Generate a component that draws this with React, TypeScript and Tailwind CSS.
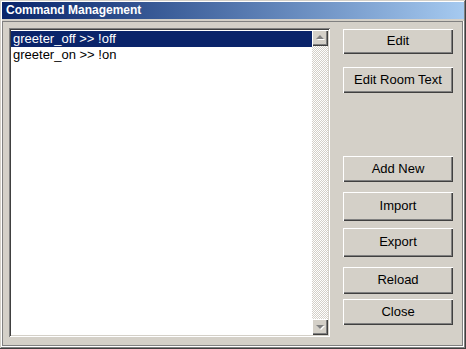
const raised =
  "shadow-[inset_1px_1px_#ffffff,inset_-1px_-1px_#404040,inset_-2px_-2px_#808080]";

const buttons = [
  { label: "Edit", cls: "mt-[1px] h-[25px]" },
  { label: "Edit Room Text", cls: "mt-[13px] h-[26px]" },
  { label: "Add New", cls: "mt-[63px] h-[26px]" },
  { label: "Import", cls: "mt-[10px] h-[29px]" },
  { label: "Export", cls: "mt-[7px] h-[29px]" },
  { label: "Reload", cls: "mt-[10px] h-[27px]" },
  { label: "Close", cls: "mt-[5px] h-[26px]" },
];

const items = ["greeter_off >> !off", "greeter_on >> !on"];

function Arrow({ up }: { up: boolean }) {
  const pts = up ? "4,9 8,5 12,9" : "4,6 8,10 12,6";
  const shadow = up ? "5,10 9,6 13,10" : "5,7 9,11 13,7";
  return (
    <div className={`w-[16px] h-[16px] bg-[#d4d0c8] ${raised}`}>
      <svg width="16" height="16" viewBox="0 0 16 16">
        <polygon points={shadow} fill="#ffffff" />
        <polygon points={pts} fill="#808080" />
      </svg>
    </div>
  );
}

export default function App() {
  const [selected, setSelected] = React.useState(0);

  return (
    <div
      className="w-[466px] h-[349px] bg-[#d4d0c8] p-[2px] flex flex-col shadow-[inset_-1px_-1px_#404040,inset_1px_1px_#d4d0c8,inset_-2px_-2px_#808080,inset_2px_2px_#ffffff]"
      style={{ fontFamily: '"Liberation Sans", Arial, sans-serif' }}
    >
      <div className="h-[17px] bg-gradient-to-r from-[#0a246a] to-[#a6caf0] text-white font-bold text-[12px] leading-[17px] pl-[4px]">
        Command Management
      </div>
      <div className="flex-1 mt-[2px] flex pl-[7px] pt-[7px] border-r border-b border-white shadow-[inset_1px_1px_#808080,inset_-1px_-1px_#808080]">
        <div className="w-[321px] h-[309px] p-[2px] bg-white flex shadow-[inset_1px_1px_#808080,inset_-1px_-1px_#ffffff,inset_2px_2px_#404040,inset_-2px_-2px_#d4d0c8]">
          <div className="flex-1 pt-[1px] text-[13px]">
            {items.map((it, i) => (
              <div
                key={it}
                onClick={() => setSelected(i)}
                className={`h-[16px] leading-[16px] pl-[2px] whitespace-nowrap ${
                  i === selected ? "bg-[#0a246a] text-white" : "text-black"
                }`}
              >
                {it}
              </div>
            ))}
          </div>
          <div className="w-[16px] flex flex-col bg-[repeating-conic-gradient(#d4d0c8_0%_25%,#ffffff_0%_50%)] bg-[length:2px_2px]">
            <Arrow up />
            <div className="flex-1" />
            <Arrow up={false} />
          </div>
        </div>
        <div className="ml-[13px] w-[110px] flex flex-col text-[13px] text-black">
          {buttons.map((b) => (
            <button
              key={b.label}
              className={`${b.cls} w-full bg-[#d4d0c8] ${raised} flex items-center justify-center pb-[1px]`}
            >
              {b.label}
            </button>
          ))}
        </div>
      </div>
    </div>
  );
}

import React from "react";
